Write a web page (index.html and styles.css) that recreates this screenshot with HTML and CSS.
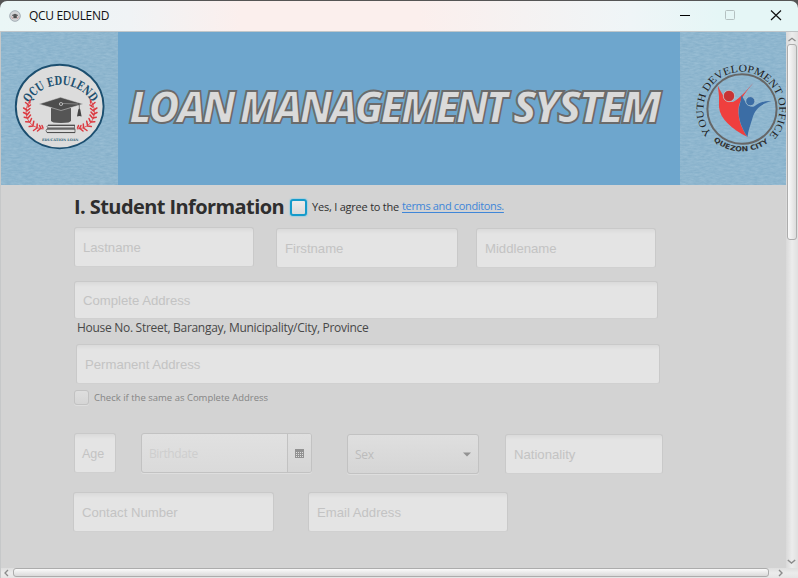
FILE: index.html
```html
<!DOCTYPE html>
<html lang="en">
<head>
<meta charset="utf-8">
<title>QCU EDULEND</title>
<link rel="stylesheet" href="styles.css">
</head>
<body>
<div class="window">
  <header class="titlebar">
    <svg class="app-icon" width="12" height="12" viewBox="0 0 12 12"><circle cx="6" cy="6" r="5.3" fill="#d2d4d6" stroke="#a3adb5"/><path d="M3 5l3-1.200 3 1.200v.8H3z" fill="#555"/><rect x="4.400" y="5.300" width="3.400" height="2.900" fill="#4d4d4d"/><path d="M2.300 6.500l1.800 2.500M9.700 6.500L8 9" stroke="#c99"/></svg>
    <span class="app-name">QCU EDULEND</span>
    <svg class="controls" width="118" height="30" viewBox="680 1 118 30" fill="none"><path d="M680 15.500h10" stroke="#000"/><rect x="725.500" y="10.500" width="9" height="9" rx="1" stroke="#b4c0c1"/><path d="M771 10.500l10 9.500M781 10.500L771 20" stroke="#111" stroke-width="1.200"/></svg>
  </header>
  <div class="viewport">
    <main class="content">
      <section class="banner">
        <svg width="785" height="154" viewBox="1 31 785 154">
          <defs>
            <filter id="paper" x="0" y="0" width="100%" height="100%" color-interpolation-filters="sRGB">
              <feTurbulence type="fractalNoise" baseFrequency="0.17 0.55" numOctaves="3" seed="8"/>
              <feColorMatrix values=".11 0 0 0 .505  .08 0 0 0 .675  .06 0 0 0 .78  0 0 0 0 1"/>
            </filter>
            <path id="edulendArc" d="M29.500 102A36 36 0 0 1 91.500 101"/>
            <path id="youthArc" d="M711.600 132.400A38 38 0 1 1 768.400 135.400"/>
            <path id="cityArc" d="M713.500 139.500A42.500 42.500 0 0 0 770.500 139.500"/>
            <g id="laurel" fill="none" stroke="#dc3940" stroke-linecap="round">
              <path d="M30 99Q24 108 27 117Q31 127 43 128" stroke-width=".8"/>
              <path d="M30 99l-.2 3M28.500 104l-3-2.500M28 106l2.500-2M26.800 109l-3.200-2M27 110l3-2.500M26.500 113l-3-1.500M27 114l2.500-3M27.500 117l-3.300-.8M28 117l2.500-3M29.500 121l-3.800-.3M30 121l1.500-3.500M33 125l-3.800.6M33 124l.8-3.700M37 127l-3.500 2.500M37 126.500l.2-3.500M40 128l-2.500 2M41 127.500l-1.500-3M43 127l-1-2.500" stroke-width="1.500"/>
            </g>
          </defs>
          <rect x="1" y="31" width="785" height="154" fill="#6ea6cd"/>
          <rect x="1" y="31" width="117" height="154" filter="url(#paper)"/>
          <rect x="680.500" y="31" width="106" height="154" filter="url(#paper)"/>

          <ellipse cx="59.700" cy="105.600" rx="43.900" ry="41.800" fill="#dcdcdc" stroke="#1c4f70" stroke-width="1.900"/>
          <text class="edulend"><textPath href="#edulendArc" textLength="75" lengthAdjust="spacingAndGlyphs">QCU EDULEND</textPath></text>
          <use href="#laurel"/>
          <use href="#laurel" transform="matrix(-1 0 0 1 120.500 0)"/>
          <path d="M51 107v12.500q0 2.500 10 2.500t10-2.500V107z" fill="#555"/>
          <path d="M39 103l21.500-6.700L83 103l-22 6.500z" fill="#4d4d4d" stroke="#dcdcdc" stroke-width=".5"/>
          <ellipse cx="61" cy="103" rx="1.700" ry="1.500" fill="#555" stroke="#ccc" stroke-width=".8"/>
          <path d="M63 102.500l15 .5" stroke="#aaa" stroke-width=".6"/>
          <path d="M79.300 103.500v4" stroke="#555" stroke-width=".8"/>
          <path d="M79.300 107l1 1.500 1.300 7q-2.300-1-4.600 0l1.300-7z" fill="#444"/>
          <path d="M74.500 124.300H48q-1.800 1.300 0 2.600h26.500zM75 127.800H47q-2 1.900 0 3.800h28z" fill="#dcdcdc" stroke="#555" stroke-width=".8"/>
          <path d="M48 124.400h27M47 128h28M47 131.500h28" stroke="#505050" stroke-width="1.200"/>
          <text class="education" x="42" y="139.500" textLength="36.500" lengthAdjust="spacingAndGlyphs">EDUCATION LOAN</text>

          <g class="banner-title">
            <text x="129" y="121.700" textLength="104" lengthAdjust="spacingAndGlyphs">LOAN</text>
            <text x="239.500" y="121.700" textLength="266" lengthAdjust="spacingAndGlyphs">MANAGEMENT</text>
            <text x="512.500" y="121.700" textLength="146" lengthAdjust="spacingAndGlyphs">SYSTEM</text>
          </g>

          <ellipse cx="742" cy="108" rx="34.600" ry="34.800" fill="none" stroke="#666" stroke-width="2"/>
          <path d="M717.800 84.500C722 94 727 101 733 101C741 97 748 87 753.500 82C747 89 739 99 738.500 108C738 119 742 128 747.500 136C732 128 720 118 719 106Q719.500 94 717.800 84.500Z" fill="#ef3f3e"/>
          <path d="M741.500 94C745 101 749 107 754 105.500C760 101 766 99.500 771.500 100C761 103 755 108 752.500 117C750.500 124 748 130 747.500 136C741 126 737.500 116 739 106Q741 100 741.500 94Z" fill="#3b6da5"/>
          <circle cx="729" cy="95" r="5.700" fill="#c83335" stroke="#c2cdd3" stroke-width=".8"/><circle cx="750.300" cy="100.200" r="4.600" fill="#3b6da5" stroke="#a6c1d1" stroke-width=".8"/>
          <text class="youth"><textPath href="#youthArc" textLength="173" lengthAdjust="spacingAndGlyphs">YOUTH DEVELOPMENT OFFICE</textPath></text>
          <text class="city"><textPath href="#cityArc" textLength="60" lengthAdjust="spacingAndGlyphs">QUEZON CITY</textPath></text>
        </svg>
      </section>

      <form class="form">
        <div class="heading-row">
          <h1>I. Student Information</h1>
          <span class="check focused"></span>
          <span class="agree">Yes, I agree to the</span>
          <a class="terms">terms and conditons.</a>
        </div>
        <div class="row names">
          <div class="field lastname">Lastname</div>
          <div class="field firstname">Firstname</div>
          <div class="field middlename">Middlename</div>
        </div>
        <div class="field complete">Complete Address</div>
        <div class="hint"><span>House No. Street, Barangay, Municipality/City, Province</span></div>
        <div class="field permanent">Permanent Address</div>
        <div class="same-row"><span class="check small"></span><span class="same">Check if the same as Complete Address</span></div>
        <div class="row personal">
          <div class="field age">Age</div>
          <div class="date"><span class="date-text">Birthdate</span><span class="date-button"><svg width="9" height="9" viewBox="0 0 9 9" shape-rendering="crispEdges"><path d="M0 0h9v9H0z" fill="#929292"/><path d="M1 3.500h7M1 5.500h7M1 7.500h7" stroke="#dedede" stroke-dasharray="1 1"/></svg></span></div>
          <div class="select"><span>Sex</span><svg width="8" height="5" viewBox="0 0 8 5"><path d="M0 .500h8L4 4.500z" fill="#929292"/></svg></div>
          <div class="field nationality">Nationality</div>
        </div>
        <div class="row contacts">
          <div class="field contact">Contact Number</div>
          <div class="field email">Email Address</div>
        </div>
      </form>
    </main>
    <aside class="vbar">
      <svg width="12" height="10" viewBox="0 0 12 10"><path d="M2.500 7L6 4.300 9.500 7" fill="none" stroke="#8b8b8b" stroke-width="1.300"/></svg>
      <span class="vthumb"></span>
      <svg class="down" width="12" height="12" viewBox="0 0 12 12"><path d="M1.800 4L5.500 7 9.200 4" fill="none" stroke="#8b8b8b" stroke-width="1.400"/></svg>
    </aside>
    <footer class="hbar">
      <svg width="12" height="10" viewBox="0 0 12 10"><path d="M7 2L4 5l3 3" fill="none" stroke="#8b8b8b" stroke-width="1.300"/></svg>
      <span class="hthumb"></span>
      <svg class="right" width="12" height="10" viewBox="0 0 12 10"><path d="M4 2l3 3-3 3" fill="none" stroke="#8b8b8b" stroke-width="1.400"/></svg>
    </footer>
  </div>
</div>
</body>
</html>
```

FILE: styles.css
```css
* { box-sizing: border-box; }
body { margin: 0; background: #555; overflow: hidden; font-family: "Open Sans", "Noto Sans", sans-serif; }
svg { display: block; flex: none; }
.window { width: 798px; height: 578px; padding-top: 1px; display: flex; flex-direction: column; }
.titlebar { height: 30px; flex: none; display: flex; align-items: center; padding-left: 9px; border-radius: 7px 7px 0 0; background: linear-gradient(90deg, #eaf6f6 0, #f0f3f5 130px, #fbefed 240px, #fbefed 420px, #eff5f7 630px, #e5f6f6 720px); }
.app-name { margin: -1px 0 0 8px; font-size: 12px; letter-spacing: -.32px; color: #111; white-space: nowrap; }
.controls { margin-left: auto; }
.viewport { flex: 1; display: grid; grid-template-columns: 785px 12px; grid-template-rows: 537px 10px; border-left: 1px solid #c6c8c9; background: #e6e6e6; }
.content { background: #d3d3d3; overflow: hidden; }
.banner { height: 154px; overflow: hidden; border-top: 1px solid #c0c6c9; }
.banner-title { font: italic 800 45px "Open Sans", sans-serif; letter-spacing: -3.5px; fill: #dadada; stroke: #6b6b6b; stroke-width: 1.8px; }
.edulend { font: 700 12px "DejaVu Serif", serif; fill: #1d506f; }
.education { font: 700 3.6px "DejaVu Serif", serif; fill: #2b5c76; }
.youth { font: 10.5px "Liberation Serif", serif; fill: #222; }
.city { font: 700 7px "DejaVu Sans", sans-serif; fill: #333; }

.form { padding-left: 72px; }
.heading-row { height: 42px; display: flex; align-items: center; padding: 2px 0 0 1px; white-space: nowrap; }
h1 { margin: -2px 0 0; width: 216px; font: 700 20px "Open Sans", sans-serif; letter-spacing: -.58px; color: #2e2e2e; }
.check { width: 15px; height: 15px; flex: none; border: 1px solid #c2c2c2; border-radius: 3px; background: linear-gradient(#dedede, #d5d5d5); box-shadow: 0 1px #dedede; }
.check.focused { width: 17px; height: 17px; border: 2px solid #159bcb; background: linear-gradient(#ececec, #dadada); box-shadow: 0 0 1px 1px #a7cfdf; }
.agree { width: 90px; margin: -2px 0 0 5px; font-size: 11px; letter-spacing: -.22px; color: #303030; }
.terms { margin-top: -3px; font-size: 11px; letter-spacing: -.35px; color: #3f86d8; text-decoration: underline; text-underline-offset: 2px; }
.row { display: flex; align-items: flex-start; }
.field { height: 40px; flex: none; display: flex; align-items: center; padding: 0 8px; border: 1px solid #c9c9c9; border-bottom-color: #d0d0d0; border-radius: 3px; background: linear-gradient(#dadada, #e4e4e4 5px); font: 13.15px "Liberation Sans", sans-serif; color: #c3c3c3; white-space: nowrap; }
.names { padding-left: 1px; }
.lastname { width: 180px; }
.firstname { width: 182px; margin: 1px 0 0 22px; }
.middlename { width: 180px; margin: 1px 0 0 18px; }
.complete { width: 584px; height: 38px; margin: 13px 0 0 1px; }
.hint { height: 25px; padding-left: 4px; font-size: 12px; line-height: 18px; letter-spacing: -.29px; color: #484848; white-space: nowrap; }
.permanent { width: 584px; margin-left: 3px; }
.same-row { height: 26px; display: flex; align-items: center; padding-left: 1px; color: #858585; }
.same { margin-left: 5px; font-size: 9.5px; white-space: nowrap; }
.personal { padding: 23px 0 0 1px; }
.age { width: 42px; padding: 2px 7px 0; font-size: 12.5px; }
.date { display: flex; width: 171px; height: 40px; margin-left: 25px; border: 1px solid #c2c2c2; border-radius: 3px; box-shadow: 0 1px #dedede; overflow: hidden; background: linear-gradient(#e1e1e1, #dadada); }
.date-text { flex: 1; padding-left: 7px; line-height: 40px; font-size: 12px; letter-spacing: -.4px; color: #cecece; }
.date-button { width: 24px; display: flex; align-items: center; justify-content: center; border-left: 1px solid #c2c2c2; background: linear-gradient(#dfdfdf, #d5d5d5); }
.select { width: 132px; height: 40px; margin: 1px 0 0 35px; padding: 0 7px; display: flex; align-items: center; justify-content: space-between; border: 1px solid #c2c2c2; border-radius: 3px; box-shadow: 0 1px #dedede; background: linear-gradient(#dfdfdf, #d5d5d5); font-size: 12px; letter-spacing: -.3px; color: #bcbcbc; }
.nationality { width: 158px; margin: 1px 0 0 26px; }
.contacts { padding-top: 18px; }
.contact { width: 201px; }
.email { width: 200px; margin-left: 34px; }

.vbar { display: flex; flex-direction: column; align-items: center; padding-top: 2px; background: linear-gradient(90deg, #d9d9d9, #ececec 50%, #e0e0e0); border-top: 1px solid #bfc3c5; }
.vthumb { width: 10px; height: 196px; border: 1px solid #acacac; border-radius: 3px; background: linear-gradient(90deg, #fafafa, #dcdcdc); }
.down { margin-top: auto; }
.hbar { grid-column: 1 / 3; display: flex; background: linear-gradient(#dedede, #ececec 50%, #e4e4e4); }
.hthumb { width: 756px; height: 9px; border: 1px solid #acacac; border-radius: 3px; background: linear-gradient(#fafafa, #dadada); }
.right { margin-left: 6px; }
```
